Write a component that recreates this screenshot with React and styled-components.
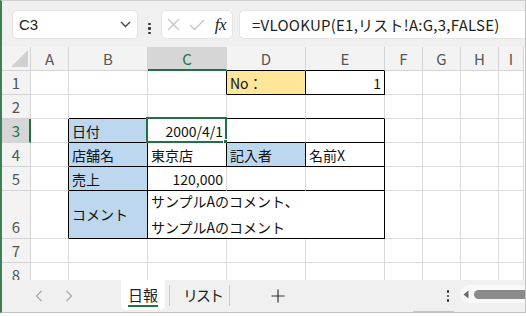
import React from "react";
import styled, { createGlobalStyle } from "styled-components";

const Global = createGlobalStyle`
  html, body { margin: 0; padding: 0; background: #ffffff; }
  body { font-family: "Noto Sans CJK JP", "Noto Sans", sans-serif; }
`;

const GRID = "#dadada";
const HEAD_BG = "#f3f3f3";
const SEL_BG = "#d6d6d6";
const GREEN = "#1f7244";
const BLUE = "#bdd7ee";
const YELLOW = "#ffe699";
const FONT = `"Noto Sans CJK JP", "Noto Sans", sans-serif`;

const Frame = styled.div`
  width: 523px;
  height: 311px;
  border-left: 2px solid #3e7f58;
  border-right: 1px solid #c2c2c2;
  border-top: 1px solid #cfcfcf;
  border-bottom: 1px solid #c2c2c2;
  display: flex;
  flex-direction: column;
  background: #f0f0f0;
  overflow: hidden;
`;

const FormulaBar = styled.div`
  height: 46px;
  flex: 0 0 46px;
  display: flex;
  align-items: flex-start;
  padding-top: 9px;
  padding-left: 10px;
  box-sizing: border-box;
  background: #f0f0f0;
`;

const Box = styled.div`
  height: 29px;
  background: #ffffff;
  border: 1px solid #e4e4e4;
  border-radius: 5px;
  box-sizing: border-box;
  display: flex;
  align-items: center;
`;

const NameBox = styled(Box)`
  width: 126px;
  padding: 0 6px 0 6px;
  justify-content: space-between;
  font-size: 15px;
  color: #222;
  font-family: "Liberation Sans", Arial, sans-serif;
`;

const Dots = styled.div`
  width: ${(p) => p.$w || 23}px;
  display: flex;
  flex-direction: column;
  align-items: center;
  gap: 2px;
  align-self: center;
  & > span {
    width: 2.5px;
    height: 2.5px;
    background: #333;
    border-radius: 1px;
  }
`;

const FxBox = styled(Box)`
  width: 72px;
  padding: 0 4px 0 5px;
  justify-content: space-between;
`;

const Fx = styled.span`
  font-family: "Liberation Serif", "DejaVu Serif", serif;
  font-style: italic;
  font-size: 17px;
  color: #222;
  letter-spacing: -0.5px;
  padding-right: 2px;
`;

const FormulaInput = styled(Box)`
  flex: 1;
  margin-left: 6px;
  border-radius: 5px 0 0 5px;
  border-right: none;
  padding-left: 12px;
  font-size: 15px;
  letter-spacing: 0.25px;
  color: #222;
  font-family: ${FONT};
  white-space: nowrap;
  overflow: hidden;
`;

const Sheet = styled.div`
  display: grid;
  grid-template-columns: 29px 38px 79px 79px 79px 79px 38px 38px 38px 25px;
  grid-template-rows: 24px 24px 24px 24px 24px 24px 48px 24px 24px;
  background: #ffffff;
  height: 233px;
  flex: 0 0 233px;
  overflow: hidden;
`;

const Cell = styled.div`
  position: relative;
  box-sizing: border-box;
  border-right: 1px solid ${(p) => (p.$rb ? "#000" : GRID)};
  border-bottom: 1px solid ${(p) => (p.$bb ? "#000" : GRID)};
  background: ${(p) => p.$bg || "#fff"};
  grid-column: ${(p) => (p.$span ? `span ${p.$span}` : "auto")};
  display: flex;
  align-items: ${(p) => (p.$valign === "center" ? "center" : "flex-end")};
  justify-content: ${(p) => (p.$align === "right" ? "flex-end" : "flex-start")};
  padding: 0 3px 1px 3px;
  font-size: 14px;
  line-height: 20px;
  color: #111;
  white-space: pre;
  font-family: ${FONT};
`;

const MultiLine = styled.div`
  line-height: 26px;
`;

const ColHead = styled.div`
  box-sizing: border-box;
  background: ${(p) => (p.$sel ? SEL_BG : HEAD_BG)};
  color: ${(p) => (p.$sel ? GREEN : "#555")};
  border-right: 1px solid #d4d4d4;
  border-bottom: ${(p) =>
    p.$sel ? `2px solid ${GREEN}` : p.$bb ? "1px solid #000" : "1px solid #d4d4d4"};
  display: flex;
  align-items: center;
  justify-content: center;
  font-size: 15px;
  font-family: ${FONT};
  padding-top: ${(p) => (p.$sel ? "1px" : "0")};
`;

const Corner = styled.div`
  box-sizing: border-box;
  background: ${HEAD_BG};
  border-right: 1px solid #d4d4d4;
  border-bottom: 1px solid #d4d4d4;
  display: flex;
  align-items: flex-end;
  justify-content: flex-end;
  padding: 0 2px 3px 0;
`;

const Triangle = styled.div`
  width: 0;
  height: 0;
  border-left: 17px solid transparent;
  border-bottom: 17px solid #d0d0d0;
`;

const RowHead = styled.div`
  box-sizing: border-box;
  background: ${(p) => (p.$sel ? SEL_BG : HEAD_BG)};
  color: ${(p) => (p.$sel ? GREEN : "#555")};
  border-right: ${(p) => (p.$sel ? `2px solid ${GREEN}` : "1px solid #d4d4d4")};
  border-bottom: 1px solid #d4d4d4;
  display: flex;
  align-items: flex-end;
  justify-content: center;
  font-size: 15px;
  line-height: 22px;
  font-family: ${FONT};
  padding-left: ${(p) => (p.$sel ? "1px" : "0")};
`;

const Selection = styled.div`
  position: absolute;
  left: -2px;
  top: -2px;
  right: -1px;
  bottom: -1px;
  border: 2px solid ${GREEN};
  pointer-events: none;
`;

const Handle = styled.div`
  position: absolute;
  right: -5px;
  bottom: -5px;
  width: 5px;
  height: 5px;
  background: ${GREEN};
  border: 1px solid #fff;
`;

const TabBar = styled.div`
  height: 32px;
  flex: 0 0 32px;
  display: flex;
  align-items: stretch;
  background: #f0f0f0;
  font-family: ${FONT};
`;

const NavArrow = styled.div`
  width: 30px;
  display: flex;
  align-items: center;
  justify-content: center;
  color: #a6a6a6;
  margin-left: ${(p) => p.$ml || 0}px;
`;

const Tab = styled.div`
  position: relative;
  padding: 0 7px;
  display: flex;
  align-items: center;
  font-size: 15px;
  letter-spacing: ${(p) => p.$ls || 0}px;
  color: #222;
  background: ${(p) => (p.$active ? "#ffffff" : "transparent")};
  border-radius: 0 0 5px 5px;
  margin-bottom: 2px;
  margin-left: ${(p) => p.$ml || 0}px;
  & > span {
    border-bottom: 2px solid ${(p) => (p.$active ? GREEN : "transparent")};
    line-height: 20px;
    padding-top: 2px;
  }
`;

const Sep = styled.div`
  width: 1px;
  background: #c9c9c9;
  margin: 5px ${(p) => p.$mr || 0}px 6px ${(p) => p.$ml || 0}px;
`;

const Plus = styled.div`
  display: flex;
  align-items: center;
  margin-left: 41px;
`;

const Spacer = styled.div`
  flex: ${(p) => (p.$w ? `0 0 ${p.$w}px` : 1)};
`;

const ScrollTrack = styled.div`
  width: 62px;
  margin: 5px 0 9px 0;
  background: #f9f9f9;
  border-radius: 9px 0 0 9px;
  display: flex;
  align-items: center;
  padding-left: 3px;
  gap: 5px;
`;

const Thumb = styled.div`
  flex: 1;
  height: 9px;
  background: #8b8b8b;
  border-radius: 5px 0 0 5px;
`;

const BottomEdge = styled.div`
  height: 0;
  position: relative;
`;

const Splitter = styled.div`
  position: absolute;
  left: 411px;
  top: -1px;
  width: 41px;
  height: 3px;
  background: #c6c6c6;
`;

const cols = ["A", "B", "C", "D", "E", "F", "G", "H", "I"];

const empty = () => [{}, {}, {}, {}, {}, {}, {}, {}, {}];

const rows = [
  {
    n: "1",
    cells: [
      {}, {}, { rb: 1 },
      { t: "No：", bg: YELLOW, rb: 1, bb: 1 },
      { t: "1", align: "right", rb: 1, bb: 1 },
      {}, {}, {}, {},
    ],
  },
  {
    n: "2",
    cells: [{}, { bb: 1 }, { bb: 1 }, { bb: 1 }, { bb: 1 }, {}, {}, {}, {}],
  },
  {
    n: "3",
    sel: true,
    cells: [
      { rb: 1 },
      { t: "日付", bg: BLUE, rb: 1, bb: 1 },
      { t: "2000/4/1", align: "right", rb: 1, bb: 1, selected: true },
      { bb: 1 },
      { rb: 1, bb: 1 },
      {}, {}, {}, {},
    ],
  },
  {
    n: "4",
    cells: [
      { rb: 1 },
      { t: "店舗名", bg: BLUE, rb: 1, bb: 1 },
      { t: "東京店", rb: 1, bb: 1 },
      { t: "記入者", bg: BLUE, rb: 1, bb: 1 },
      { t: "名前X", rb: 1, bb: 1 },
      {}, {}, {}, {},
    ],
  },
  {
    n: "5",
    cells: [
      { rb: 1 },
      { t: "売上", bg: BLUE, rb: 1, bb: 1 },
      { t: "120,000", align: "right", bb: 1 },
      { bb: 1 },
      { rb: 1, bb: 1 },
      {}, {}, {}, {},
    ],
  },
  {
    n: "6",
    cells: [
      { rb: 1 },
      { t: "コメント", bg: BLUE, rb: 1, bb: 1, valign: "center" },
      {
        multi: ["サンプルAのコメント、", "サンプルAのコメント"],
        span: 3,
        rb: 1,
        bb: 1,
        valign: "center",
      },
      {}, {}, {}, {},
    ],
  },
  { n: "7", cells: empty() },
  { n: "8", cells: empty() },
];

const Chevron = () => (
  <svg width="11" height="7" viewBox="0 0 11 7">
    <path d="M1 1 L5.5 5.5 L10 1" fill="none" stroke="#444" strokeWidth="1.4" />
  </svg>
);

const Cross = () => (
  <svg width="13" height="13" viewBox="0 0 13 13">
    <path d="M1 1 L12 12 M12 1 L1 12" stroke="#c4c4c4" strokeWidth="1.3" fill="none" />
  </svg>
);

const Check = () => (
  <svg width="16" height="12" viewBox="0 0 16 12">
    <path d="M1 6 L5.5 10.5 L15 1" stroke="#c4c4c4" strokeWidth="1.3" fill="none" />
  </svg>
);

const ArrowL = () => (
  <svg width="8" height="12" viewBox="0 0 8 12">
    <path d="M6.5 1 L1.5 6 L6.5 11" fill="none" stroke="#a8a8a8" strokeWidth="1.2" />
  </svg>
);

const ArrowR = () => (
  <svg width="8" height="12" viewBox="0 0 8 12">
    <path d="M1.5 1 L6.5 6 L1.5 11" fill="none" stroke="#a8a8a8" strokeWidth="1.2" />
  </svg>
);

const PlusIcon = () => (
  <svg width="14" height="14" viewBox="0 0 14 14">
    <path d="M7 0.5 V13.5 M0.5 7 H13.5" stroke="#333" strokeWidth="1.2" fill="none" />
  </svg>
);

const LeftTri = () => (
  <svg width="6" height="9" viewBox="0 0 6 9">
    <path d="M5.5 0.5 L0.5 4.5 L5.5 8.5 Z" fill="#6a6a6a" />
  </svg>
);

export default function App() {
  return (
    <>
      <Global />
      <Frame>
        <FormulaBar>
          <NameBox>
            <span>C3</span>
            <Chevron />
          </NameBox>
          <Dots>
            <span />
            <span />
            <span />
          </Dots>
          <FxBox>
            <Cross />
            <Check />
            <Fx>fx</Fx>
          </FxBox>
          <FormulaInput>=VLOOKUP(E1,リスト!A:G,3,FALSE)</FormulaInput>
        </FormulaBar>

        <Sheet>
          <Corner>
            <Triangle />
          </Corner>
          {cols.map((c) => (
            <ColHead key={c} $sel={c === "C"} $bb={c === "D" || c === "E"}>
              {c}
            </ColHead>
          ))}
          {rows.map((r) => (
            <React.Fragment key={r.n}>
              <RowHead $sel={r.sel}>{r.n}</RowHead>
              {r.cells.map((c, i) => (
                <Cell
                  key={i}
                  $bg={c.bg}
                  $rb={c.rb}
                  $bb={c.bb}
                  $align={c.align}
                  $valign={c.valign}
                  $span={c.span}
                >
                  {c.multi ? (
                    <MultiLine>
                      {c.multi.map((l) => (
                        <div key={l}>{l}</div>
                      ))}
                    </MultiLine>
                  ) : (
                    c.t
                  )}
                  {c.selected && (
                    <Selection>
                      <Handle />
                    </Selection>
                  )}
                </Cell>
              ))}
            </React.Fragment>
          ))}
        </Sheet>

        <TabBar>
          <NavArrow $ml={22}>
            <ArrowL />
          </NavArrow>
          <NavArrow>
            <ArrowR />
          </NavArrow>
          <Tab $active $ml={37}>
            <span>日報</span>
          </Tab>
          <Sep $ml={4} $mr={6} />
          <Tab $ls={-2}>
            <span>リスト</span>
          </Tab>
          <Sep />
          <Plus>
            <PlusIcon />
          </Plus>
          <Spacer />
          <Dots $w={14}>
            <span />
            <span />
            <span />
          </Dots>
          <Spacer $w={5} />
          <ScrollTrack>
            <LeftTri />
            <Thumb />
          </ScrollTrack>
        </TabBar>
        <BottomEdge>
          <Splitter />
        </BottomEdge>
      </Frame>
    </>
  );
}
